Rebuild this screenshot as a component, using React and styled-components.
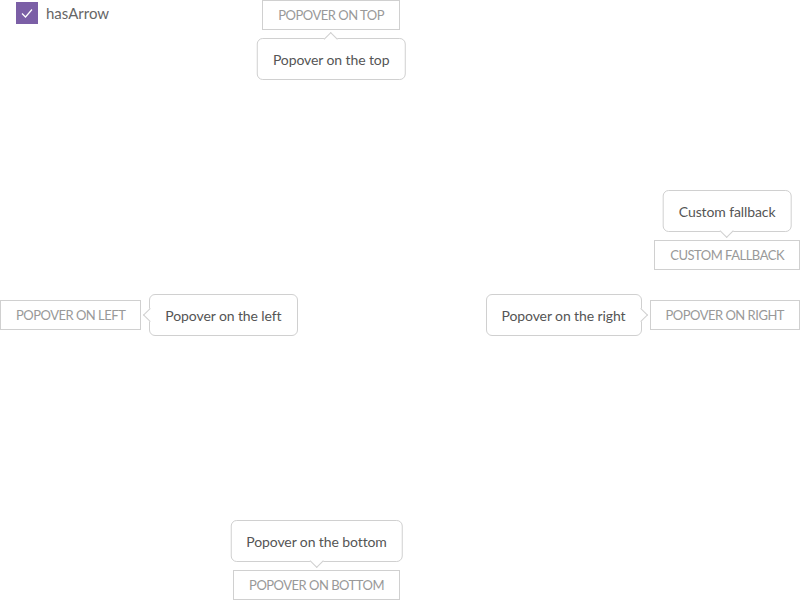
import React, { useState } from 'react'
import styled, { createGlobalStyle, css } from 'styled-components'

const GlobalStyle = createGlobalStyle`
    body {
        margin: 0;
        background: #fff;
        font-family: Lato, "Liberation Sans", sans-serif;
    }
`;

const Page = styled.div`
    width: 800px;
    height: 600px;
    display: grid;
    grid-template-rows: 30px 210px 30px 30px 30px 240px 30px;
`;

const HalfRow = styled.div`
    width: 400px;
    display: flex;
    align-items: flex-start;
    justify-content: ${(p) => (p.$split ? 'space-between' : 'flex-end')};
    grid-row: ${(p) => p.$row};
`;

const FullRow = styled.div`
    display: flex;
    justify-content: ${(p) => p.$justify || 'space-between'};
    grid-row: ${(p) => p.$row};
`;

const CheckLabel = styled.label`
    display: flex;
    align-items: center;
    gap: 8px;
    margin: 2px 0 0 16px;
    font-size: 15px;
    color: #666;
    cursor: pointer;
`;

const Box = styled.span`
    width: 22px;
    height: 22px;
    background: ${(p) => (p.$on ? '#7b5fa6' : '#fff')};
    border: ${(p) => (p.$on ? 'none' : '1px solid #ccc')};
    box-sizing: border-box;
    display: flex;
    align-items: center;
    justify-content: center;
`;

const Anchor = styled.div`
    position: relative;
`;

const Button = styled.button`
    height: 30px;
    box-sizing: border-box;
    padding: 0 15px;
    border: 1px solid #d0d0d0;
    background: #fff;
    color: #999;
    font-family: Lato, "Liberation Sans", sans-serif;
    font-size: 13px;
    letter-spacing: -0.5px;
    text-transform: uppercase;
    white-space: nowrap;
    display: block;
`;

const placements = {
    bottom: css`
        top: 38px;
        left: 50%;
        transform: translateX(-50%);
    `,
    top: css`
        bottom: 38px;
        left: 50%;
        transform: translateX(-50%);
    `,
    right: css`
        left: calc(100% + 8px);
        top: 50%;
        transform: translateY(-50%);
    `,
    left: css`
        right: calc(100% + 8px);
        top: 50%;
        transform: translateY(-50%);
    `,
};

const arrows = {
    bottom: css`
        top: -5px;
        left: 50%;
        margin-left: -5px;
        border-width: 1px 0 0 1px;
    `,
    top: css`
        bottom: -5px;
        left: 50%;
        margin-left: -5px;
        border-width: 0 1px 1px 0;
    `,
    right: css`
        left: -5px;
        top: 50%;
        margin-top: -5px;
        border-width: 0 0 1px 1px;
    `,
    left: css`
        right: -5px;
        top: 50%;
        margin-top: -5px;
        border-width: 1px 1px 0 0;
    `,
};

const Popover = styled.div`
    position: absolute;
    ${(p) => placements[p.$side]}
    height: 42px;
    box-sizing: border-box;
    padding: 0 15px;
    display: flex;
    align-items: center;
    background: #fff;
    border: 1px solid #d0d0d0;
    border-radius: 6px;
    color: #555;
    font-size: 14px;
    letter-spacing: -0.1px;
    white-space: nowrap;
    z-index: 2;
`;

const Arrow = styled.span`
    position: absolute;
    width: 9px;
    height: 9px;
    background: #fff;
    border: 0 solid #d0d0d0;
    transform: rotate(45deg);
    ${(p) => arrows[p.$side]}
`;

const WithPopover = ({ label, text, side, arrow }) => (
    <Anchor>
        <Button>{label}</Button>
        <Popover $side={side}>
            {arrow && <Arrow $side={side} />}
            {text}
        </Popover>
    </Anchor>
)

const App = () => {
    const [hasArrow, setHasArrow] = useState(true)

    return (
        <Page>
            <GlobalStyle />
            <HalfRow $row={1} $split>
                <CheckLabel onClick={() => setHasArrow(!hasArrow)}>
                    <Box $on={hasArrow}>
                        {hasArrow && (
                            <svg width="14" height="14" viewBox="0 0 14 14">
                                <path d="M2 7.5 L5.5 11 L12 3.5" fill="none" stroke="#fff" strokeWidth="1.2" />
                            </svg>
                        )}
                    </Box>
                    hasArrow
                </CheckLabel>
                <WithPopover label="Popover on top" text="Popover on the top" side="bottom" arrow={hasArrow} />
            </HalfRow>
            <FullRow $row={3} $justify="flex-end">
                <WithPopover label="Custom fallback" text="Custom fallback" side="top" arrow={hasArrow} />
            </FullRow>
            <FullRow $row={5}>
                <WithPopover label="Popover on left" text="Popover on the left" side="right" arrow={hasArrow} />
                <WithPopover label="Popover on right" text="Popover on the right" side="left" arrow={hasArrow} />
            </FullRow>
            <HalfRow $row={7}>
                <WithPopover label="Popover on bottom" text="Popover on the bottom" side="top" arrow={hasArrow} />
            </HalfRow>
        </Page>
    )
}

export default App
